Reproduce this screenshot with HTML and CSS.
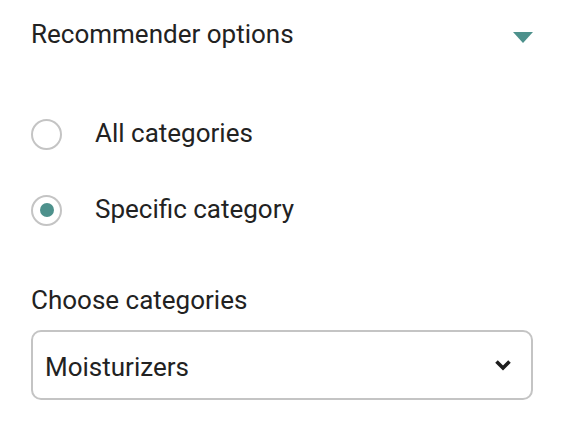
FILE: index.html
```html
<!DOCTYPE html>
<html>
<head>
    <title>Recommender options</title>
    <link rel="stylesheet" href="styles.css">
</head>
<body>
    <div class="panel">
        <div class="header">
            <span class="title">Recommender options</span>
            <span class="caret"></span>
        </div>

        <div class="radios">
            <label class="radio">
                <span class="dot"></span>
                <span>All categories</span>
            </label>
            <label class="radio checked">
                <span class="dot"></span>
                <span>Specific category</span>
            </label>
        </div>

        <div class="field">
            <div class="field-label">Choose categories</div>
            <div class="select">
                <span>Moisturizers</span>
                <svg class="chevron" width="18" height="12" viewBox="0 0 18 12">
                    <path d="M2.5 2.5 L9 9 L15.5 2.5" fill="none" stroke="#1e1e1e" stroke-width="3.6"/>
                </svg>
            </div>
        </div>
    </div>
</body>
</html>
```

FILE: styles.css
```css
body {
    margin: 0;
    background: #fff;
    font-family: Roboto, "Liberation Sans", sans-serif;
    color: #222;
}
.panel {
    padding: 12px 29px 0 31px;
}
.header {
    display: flex;
    align-items: center;
    justify-content: space-between;
    height: 44px;
}
.title {
    font-size: 26px;
}
.caret {
    width: 0;
    height: 0;
    border-left: 10px solid transparent;
    border-right: 10px solid transparent;
    border-top: 11px solid #4d918c;
    margin-top: 6px;
}
.radios {
    margin-top: 40px;
    display: flex;
    flex-direction: column;
}
.radio {
    display: flex;
    align-items: center;
    height: 76px;
    font-size: 26px;
}
.radio span:last-child {
    margin-top: -2px;
}
.dot {
    width: 27px;
    height: 27px;
    border: 2px solid #c4c4c4;
    border-radius: 50%;
    margin-right: 33px;
    display: flex;
    align-items: center;
    justify-content: center;
}
.checked .dot::after {
    content: "";
    width: 14px;
    height: 14px;
    border-radius: 50%;
    background: #4d918c;
}
.field {
    margin-top: 34px;
}
.field-label {
    font-size: 26px;
    height: 36px;
    line-height: 36px;
}
.select {
    margin-top: 12px;
    height: 63px;
    border: 2px solid #c4c4c4;
    border-radius: 10px;
    display: flex;
    align-items: center;
    justify-content: space-between;
    padding: 3px 19px 0 12px;
    font-size: 26px;
}
.chevron {
    margin-top: -3px;
}
```
